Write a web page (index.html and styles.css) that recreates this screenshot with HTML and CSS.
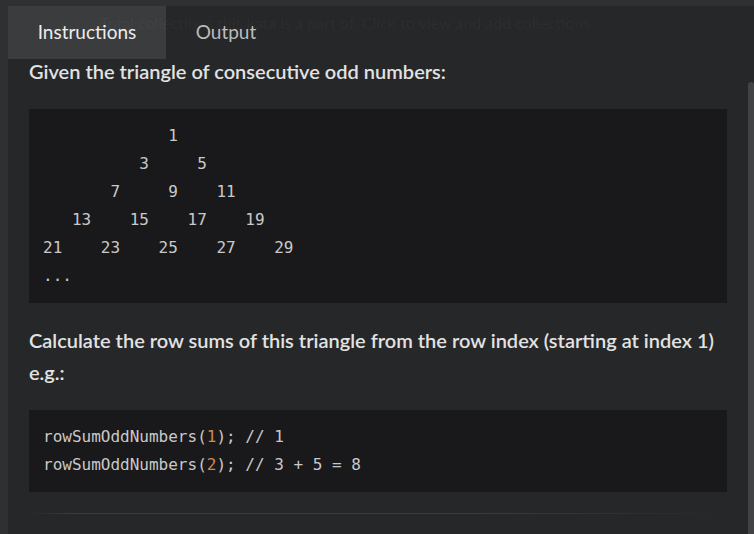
FILE: index.html
```html
<!DOCTYPE html>
<html lang="en">
<head>
<meta charset="utf-8">
<title>Kata description</title>
<link rel="stylesheet" href="styles.css">
</head>
<body>
<div class="app">
  <div class="panel">
    <div class="tabs">
      <div class="tab active">Instructions</div>
      <div class="tab">Output</div>
    </div>
    <div class="ghost">Total collections this kata is a part of. Click to view and add collections.</div>
    <div class="content">
      <p class="lead">Given the triangle of consecutive odd numbers:</p>
<pre class="code">             1
          3     5
       7     9    11
   13    15    17    19
21    23    25    27    29
...</pre>
      <p class="desc">Calculate the row sums of this triangle from the row index (starting at index 1) e.g.:</p>
<pre class="code"><span class="line">rowSumOddNumbers(<span class="num">1</span>); // 1</span><span class="line">rowSumOddNumbers(<span class="num">2</span>); // 3 + 5 = 8</span></pre>
      <div class="rule"></div>
    </div>
    <div class="thumb"></div>
  </div>
</div>
</body>
</html>
```
FILE: styles.css
```css
html, body {
  margin: 0;
  padding: 0;
  height: 100%;
  overflow: hidden;
}
body {
  background: #2f3032;
  font-family: Lato, "Noto Sans", sans-serif;
}
.app {
  box-sizing: border-box;
  height: 100%;
  padding: 6px 0 0 8px;
}
.panel {
  position: relative;
  height: 100%;
  background: #262729;
  overflow: hidden;
}
.tabs {
  display: flex;
  height: 53px;
}
.tab {
  display: flex;
  align-items: center;
  justify-content: center;
  padding-bottom: 3px;
  box-sizing: border-box;
  font-size: 19px;
  color: #bcbcbc;
}
.tab.active {
  width: 158px;
  background: #3b3c3e;
  color: #ececec;
}
.tab:not(.active) {
  width: 120px;
}
.ghost {
  position: absolute;
  left: 92px;
  top: 7px;
  font-size: 16px;
  line-height: 20px;
  color: rgba(255, 255, 255, 0.04);
  white-space: nowrap;
  pointer-events: none;
}
.content {
  padding: 0 27px 0 21px;
}
.lead {
  margin: 0 0 26px;
  font-size: 20px;
  line-height: 24px;
  font-weight: 600;
  color: #e2e2e2;
}
.desc {
  margin: 21px 0 22px;
  font-size: 20px;
  line-height: 32px;
  font-weight: 600;
  color: #e2e2e2;
}
.code {
  margin: 0;
  padding: 13px 14px;
  background: #19191b;
  font-family: "DejaVu Sans Mono", "Liberation Mono", monospace;
  font-size: 16px;
  line-height: 28px;
  color: #c9c9c9;
}
.line {
  display: block;
}
.num {
  color: #d4884a;
}
.rule {
  height: 1px;
  margin-top: 21px;
  background: linear-gradient(to right, rgba(58, 59, 61, 0) 0%, #3a3b3d 6%, #3a3b3d 65%, rgba(58, 59, 61, 0) 100%);
}
.thumb {
  position: absolute;
  right: 0;
  top: 76px;
  bottom: 0;
  width: 6px;
  background: #424345;
  border-radius: 3px 3px 0 0;
}
```
